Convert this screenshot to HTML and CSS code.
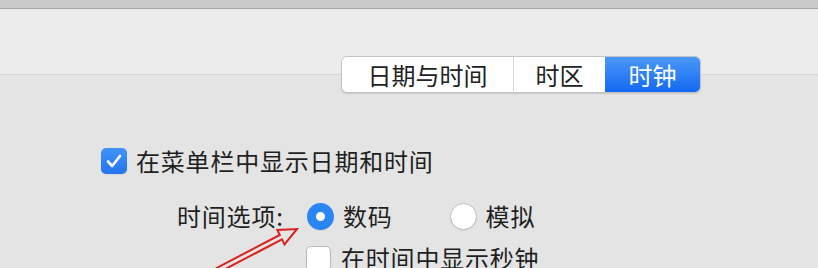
FILE: index.html
```html
<!DOCTYPE html>
<html lang="zh-CN">
<head>
    <meta charset="UTF-8">
    <meta name="viewport" content="width=device-width, initial-scale=1.0">
    <title>日期与时间</title>
    <link rel="stylesheet" href="styles.css">
</head>
<body>
    <div class="titlebar"></div>
    <div class="toolbar">
        <div class="tabs">
            <div class="tab tab-date">日期与时间</div>
            <div class="tab tab-zone">时区</div>
            <div class="tab tab-clock active">时钟</div>
        </div>
    </div>

    <div class="pane">
        <label class="row row-menu">
            <span class="checkbox checked">
                <svg viewBox="0 0 26 26" width="26" height="26"><path d="M7 13.5 L11.2 18 L19 8" fill="none" stroke="#fff" stroke-width="2.6" stroke-linecap="round" stroke-linejoin="round"/></svg>
            </span>
            <span class="text">在菜单栏中显示日期和时间</span>
        </label>

        <div class="row row-options">
            <span class="text label">时间选项:</span>
            <div class="radios">
                <label class="radio-item">
                    <span class="radio checked"></span>
                    <span class="text">数码</span>
                </label>
                <label class="radio-item">
                    <span class="radio"></span>
                    <span class="text">模拟</span>
                </label>
            </div>
        </div>

        <label class="row row-seconds">
            <span class="checkbox"></span>
            <span class="text">在时间中显示秒钟</span>
        </label>
    </div>

    <!-- 标注箭头 -->
    <svg class="arrow" width="818" height="268" viewBox="0 0 818 268">
        <polygon points="216.9,267.8 279.8,235 277.3,230 297,229 284.5,244.4 282,239.4 219.1,272.2" fill="none" stroke="#d8231f" stroke-width="2" stroke-linejoin="miter"/>
    </svg>
</body>
</html>
```

FILE: styles.css
```css
body {
    margin: 0;
    width: 818px;
    height: 268px;
    overflow: hidden;
    position: relative;
    background-color: #e4e4e4;
    font-family: "Noto Sans CJK SC", "Noto Sans", sans-serif;
    color: #1f1f1f;
}

.titlebar {
    height: 8px;
    background-color: #c9c9c9;
    border-bottom: 1px solid #a7a7a7;
}

.toolbar {
    height: 66px;
    box-sizing: border-box;
    padding-top: 47px;
    padding-left: 341px;
    background-color: #ececec;
    border-bottom: 1px solid #d6d6d6;
}

.tabs {
    position: relative;
    z-index: 1;
    display: flex;
    width: 360px;
    height: 37px;
    box-sizing: border-box;
    border: 1px solid #c4c4c4;
    border-radius: 6px;
    background-color: #fff;
    box-shadow: 0 1px 1px rgba(0,0,0,0.12);
    overflow: hidden;
}

.tab {
    display: flex;
    align-items: center;
    justify-content: center;
    font-size: 24px;
    line-height: 1;
    color: #222;
}

.tab-date {
    width: 171px;
    border-right: 1px solid #d9d9d9;
}

.tab-zone {
    width: 91px;
}

.tab-clock {
    flex: 1;
}

.tab.active {
    background: linear-gradient(#4b98f8, #1369f1);
    color: #fff;
}

.pane {
    display: grid;
    grid-template-columns: 205px 1fr;
    padding: 71px 0 0 101px;
}

.row {
    display: flex;
    align-items: center;
    height: 30px;
}

.text {
    font-size: 24px;
    line-height: 1;
    letter-spacing: 0.8px;
    white-space: nowrap;
}

.row-menu {
    grid-column: 1 / 3;
}

.row-menu .checkbox {
    margin-right: 9px;
}

.checkbox {
    width: 26px;
    height: 26px;
    box-sizing: border-box;
    border-radius: 5px;
    background-color: #fff;
    border: 1px solid #b9b9b9;
    box-shadow: 0 1px 1px rgba(0,0,0,0.06);
    flex-shrink: 0;
}

.checkbox svg {
    display: block;
    margin: -1px;
}

.checkbox.checked {
    border: none;
    background: linear-gradient(#4293f7, #2374f0);
}

.checkbox.checked svg {
    margin: 0;
}

.row-options {
    grid-column: 1 / 3;
    margin-top: 25px;
}

.row-options .label {
    width: 129px;
    margin-left: 76px;
}

.radios {
    display: flex;
    align-items: center;
    gap: 57px;
    margin-left: 1px;
}

.radio-item {
    display: flex;
    align-items: center;
    gap: 9px;
}

.radio {
    width: 27px;
    height: 27px;
    box-sizing: border-box;
    border-radius: 50%;
    background-color: #fff;
    border: 1px solid #bdbdbd;
    box-shadow: 0 1px 1px rgba(0,0,0,0.06);
}

.radio.checked {
    border: 9px solid #2b85f5;
    background-color: #fff;
}

.row-seconds {
    grid-column: 2;
    margin-top: 12px;
}

.row-seconds .checkbox {
    width: 25px;
    height: 25px;
    margin-right: 10px;
}

.arrow {
    position: absolute;
    top: 0;
    left: 0;
    pointer-events: none;
}
```
